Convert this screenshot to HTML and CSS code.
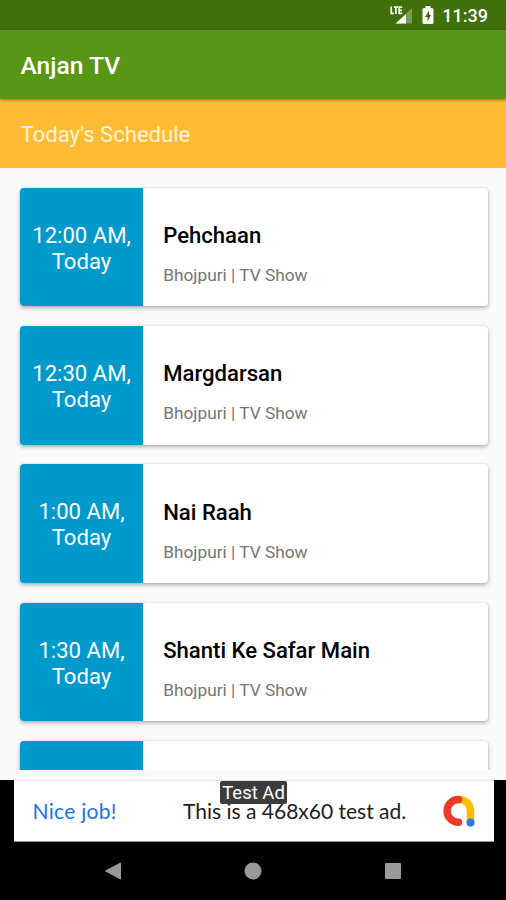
FILE: index.html
```html
<!DOCTYPE html>
<html lang="en">
<head>
  <meta charset="utf-8" />
  <title>Anjan TV</title>
  <link rel="stylesheet" href="styles.css">
</head>
<body>
  <div class="status-bar">
    <svg class="signal" width="24" height="20" viewBox="0 0 24 20">
      <path d="M22 3V18.5H6z" fill="#fff" fill-opacity=".3" />
      <path d="M16 9V18.5H5.5z" fill="#fff" />
      <path d="M1.2 1.5V8.3H3.8M3.8 2.2H8M5.9 2.2V9M12.2 2.2H9.2V8.3H12.2M9.2 5.3H12" fill="none" stroke="#fff" stroke-width="1.7" />
    </svg>
    <svg class="battery" width="12" height="20" viewBox="0 0 12 20">
      <path d="M3.5 1h5v2H10a1.5 1.5 0 0 1 1.5 1.5v13A1.5 1.5 0 0 1 10 19H2A1.5 1.5 0 0 1 .5 17.5v-13A1.5 1.5 0 0 1 2 3h1.5z" fill="#fff" />
      <path d="M7 5.5L3 12h2.5v4.5L9 10H7z" fill="#3f6f0c" />
    </svg>
    <span class="clock">11:39</span>
  </div>

  <header class="app-bar"><h1>Anjan TV</h1></header>
  <h2 class="schedule-title">Today's Schedule</h2>

  <main class="schedule">
    <div class="card">
      <div class="time">12:00 AM,<br />Today</div>
      <div class="show">
        <h3>Pehchaan</h3>
        <p>Bhojpuri | TV Show</p>
      </div>
    </div>
    <div class="card">
      <div class="time">12:30 AM,<br />Today</div>
      <div class="show">
        <h3>Margdarsan</h3>
        <p>Bhojpuri | TV Show</p>
      </div>
    </div>
    <div class="card">
      <div class="time">1:00 AM,<br />Today</div>
      <div class="show">
        <h3>Nai Raah</h3>
        <p>Bhojpuri | TV Show</p>
      </div>
    </div>
    <div class="card">
      <div class="time">1:30 AM,<br />Today</div>
      <div class="show">
        <h3>Shanti Ke Safar Main</h3>
        <p>Bhojpuri | TV Show</p>
      </div>
    </div>
    <div class="card">
      <div class="time"></div>
      <div class="show"></div>
    </div>
  </main>

  <div class="ad-row">
    <div class="ad">
      <span class="ad-lead">Nice job!</span>
      <span class="ad-text">This is a 468x60 test ad.</span>
      <svg class="ad-logo" width="32" height="32" viewBox="0 0 32 32">
        <path d="M16 4.5C23 4.500 27.500 10 27.500 16V27" fill="none" stroke="#fbbc04" stroke-width="7.5" />
        <path d="M15.5 4.5A11.4 11.4 0 1 0 15.5 27.3" fill="none" stroke="#ea3a2d" stroke-width="7.5" stroke-linecap="round" />
        <circle cx="27.5" cy="27.5" r="4" fill="#2479f0" />
      </svg>
      <span class="ad-badge">Test Ad</span>
    </div>
  </div>

  <nav class="nav-bar">
    <svg width="18" height="20" viewBox="0 0 18 20"><path d="M16.5 2V18L1.5 10z" fill="#999" stroke="#999" stroke-linejoin="round" /></svg>
    <svg width="18" height="20" viewBox="0 0 18 20"><circle cx="9" cy="10" r="8.5" fill="#999" /></svg>
    <svg width="18" height="20" viewBox="0 0 18 20"><rect x="1" y="2" width="16" height="16" rx="1" fill="#999" /></svg>
  </nav>
</body>
</html>
```
FILE: styles.css
```css
html, body { margin: 0; padding: 0; }
body { width: 506px; height: 900px; overflow: hidden; display: flex; flex-direction: column; background: #fafafa; font-family: Roboto, "Liberation Sans", sans-serif; }
h1, h2, h3, p { margin: 0; font-weight: normal; }
svg { display: block; flex: none; }

.status-bar { flex: none; height: 30px; box-sizing: border-box; padding-right: 18px; display: flex; align-items: center; justify-content: flex-end; background: #3f7009; color: #fff; }
.battery { margin: 0 8px; }
.clock { font-size: 18px; font-weight: 500; line-height: 28px; padding-top: 2px; }

.app-bar { flex: none; height: 69px; padding-left: 20.5px; background: #589616; color: #fff; position: relative; box-shadow: 0 1px 3px rgba(0, 0, 0, .4); }
.app-bar h1 { font-size: 24.6px; font-weight: 500; line-height: 72px; }
.schedule-title { flex: none; height: 68.5px; padding-left: 20.5px; background: #ffbb33; color: #fff3dc; font-size: 22.1px; line-height: 71px; }

.schedule { flex: none; height: 602.5px; box-sizing: border-box; padding: 20px 18.5px 0 20px; overflow: hidden; display: flex; flex-direction: column; gap: 19.7px; }
.card { flex: none; height: 118.7px; display: flex; border-radius: 4px; background: #fff; box-shadow: 0 2px 4px rgba(0, 0, 0, .3), 0 0 2px rgba(0, 0, 0, .12); }
.time { width: 123px; box-sizing: border-box; padding-top: 1.5px; display: flex; align-items: center; justify-content: center; text-align: center; border-radius: 4px 0 0 4px; background: #0099cc; color: #fff; font-size: 22.1px; line-height: 26px; }
.show { padding: 33.3px 0 0 20.2px; }
.show h3 { color: #000; font-size: 22.1px; font-weight: 500; line-height: 28px; }
.show p { margin-top: 15.2px; color: #757575; font-size: 17.3px; line-height: 22px; }

.ad-row { flex: none; height: 62px; margin-top: 10px; padding: 0 12px 0 14px; background: #000; }
.ad { position: relative; height: 62px; box-sizing: border-box; padding: 0 19px 0 18.5px; display: flex; align-items: center; background: #fff; border-top: 1px solid #e4e4e4; border-bottom: 1px solid #999; font-family: Lato, sans-serif; font-size: 21px; }
.ad-lead, .ad-text { padding-bottom: 2px; }
.ad-lead { width: 150.5px; color: #1a73e8; letter-spacing: .3px; }
.ad-text { flex: 1; color: #202124; white-space: nowrap; }
.ad-badge { position: absolute; left: 206px; top: 0; width: 67px; height: 23px; border-radius: 2px; background: #3c3c3c; color: #fff; font-family: Roboto, sans-serif; font-size: 18.5px; line-height: 25px; text-align: center; }

.nav-bar { flex: none; height: 58px; display: flex; align-items: center; justify-content: center; gap: 122px; background: #000; }
```
